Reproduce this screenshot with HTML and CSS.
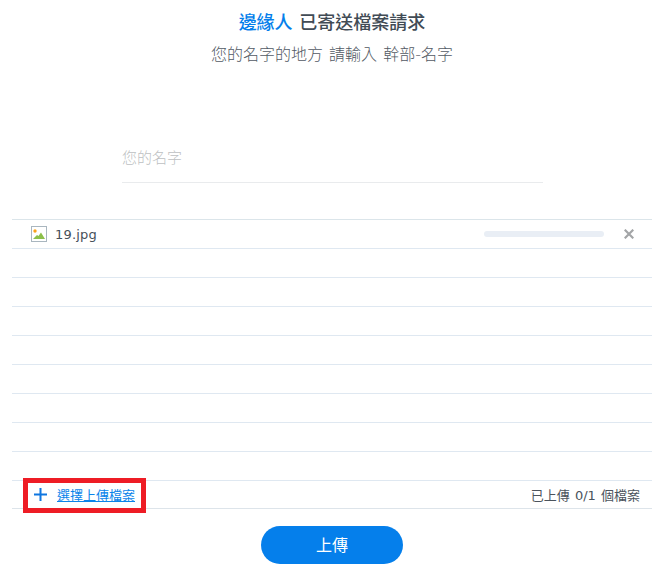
FILE: index.html
```html
<!DOCTYPE html>
<html lang="zh-Hant">
<head>
<meta charset="utf-8">
<title>上傳</title>
<link rel="stylesheet" href="styles.css">
</head>
<body>
<main class="page">
  <h1 class="title"><span class="accent">邊緣人</span> 已寄送檔案請求</h1>
  <p class="subtitle">您的名字的地方 請輸入 幹部-名字</p>
  <div class="name-field"><span class="placeholder">您的名字</span></div>
  <section class="list">
    <div class="row file-row">
      <svg class="file-icon" width="17" height="17" viewBox="0 0 17 17" aria-hidden="true">
        <rect x="0.5" y="0.5" width="15" height="15" fill="#fff" stroke="#a9b6bf"/>
        <circle cx="4" cy="5" r="1.7" fill="#f9a11b"/>
        <path d="M2 13 L6 9 L7.5 10 L10 6.5 L14 13 Z" fill="#8cbf4a"/>
      </svg>
      <span class="file-name">19.jpg</span>
      <span class="progress"></span>
      <svg class="close" width="10" height="10" viewBox="0 0 10 10" aria-hidden="true">
        <path d="M0.7 0.7 L9.3 9.3 M9.3 0.7 L0.7 9.3" stroke="#a3a5a7" stroke-width="2.2" fill="none"/>
      </svg>
    </div>
    <div class="row"></div>
    <div class="row"></div>
    <div class="row"></div>
    <div class="row"></div>
    <div class="row"></div>
    <div class="row"></div>
    <div class="row"></div>
    <div class="row"></div>
    <div class="row footer-row">
      <a class="add" href="#">
        <svg width="13" height="13" viewBox="0 0 13 13" aria-hidden="true">
          <path d="M6.5 0 V13 M0 6.5 H13" stroke="#0f76e0" stroke-width="2" fill="none"/>
        </svg>
        <span class="add-label">選擇上傳檔案</span>
      </a>
      <span class="count">已上傳 0/1 個檔案</span>
      <span class="highlight"></span>
    </div>
  </section>
  <div class="actions"><button class="upload" type="button">上傳</button></div>
</main>
</body>
</html>
```

FILE: styles.css
```css
* { box-sizing: border-box; }
html, body { margin: 0; height: 100%; background: #fff; }
body {
  font-family: "DejaVu Sans", "Noto Sans CJK TC", sans-serif;
  color: #525a64;
  overflow: hidden;
}
.page { width: 668px; height: 573px; padding: 0 16px 0 12px; }
.title {
  margin: 0;
  padding-top: 10px;
  height: 45px;
  font-size: 18px;
  line-height: 26px;
  font-weight: 500;
  word-spacing: 1px;
  text-align: center;
  font-family: "DejaVu Sans", "Noto Sans CJK TC", sans-serif;
  color: #414b55;
}
.accent { color: #057feb; }
.subtitle {
  margin: 0;
  font-size: 16px;
  line-height: 20px;
  text-align: center;
  font-family: "DejaVu Sans", "Noto Sans CJK TC", sans-serif;
  font-weight: 300;
  height: 19px;
  word-spacing: 1px;
}
.name-field {
  margin: 74px 0 0 110px;
  width: 421px;
  height: 45px;
  padding-top: 9px;
  border-bottom: 1px solid #e9ebed;
}
.placeholder {
  font-family: "Noto Sans CJK TC", sans-serif;
  font-weight: 300;
  font-size: 15px;
  line-height: 20px;
  color: #bdbfc2;
  display: block;
}
.list {
  margin-top: 36px;
  border-top: 1px solid #dbe5ea;
}
.row {
  height: 29px;
  border-bottom: 1px solid #dfe8f1;
  display: flex;
  align-items: center;
  position: relative;
}
.file-row { padding: 0 18px 0 19px; }
.file-icon { flex: none; }
.file-name { margin-left: 7px; font-size: 13px; letter-spacing: 0.2px; font-family: "DejaVu Sans", sans-serif; color: #46505a; flex: 1; }
.progress { width: 120px; height: 6px; border-radius: 3px; background: #e9eef5; margin-right: 20px; }
.close { flex: none; }
.footer-row {
  height: 28px;
  justify-content: space-between;
  padding: 0 12px 0 22px;
  border-bottom-color: #dde4ea;
}
.add { display: flex; align-items: center; gap: 10px; color: #0a84ea; text-decoration: underline; font-size: 13px; font-family: "Noto Sans CJK TC", sans-serif; }
.count { font-size: 13px; word-spacing: 1px; font-family: "DejaVu Sans", "Noto Sans CJK TC", sans-serif; color: #4b535c; }
.highlight {
  position: absolute;
  left: 11px;
  top: -3px;
  width: 123px;
  height: 35px;
  border: 5px solid #ee1c25;
  pointer-events: none;
}
.actions { display: flex; justify-content: center; margin-top: 17px; }
.upload {
  width: 142px;
  height: 38px;
  border: 0;
  border-radius: 19px;
  background: #057feb;
  color: #fff;
  font-size: 16px;
  font-family: "Noto Sans CJK TC", sans-serif;
  font-weight: 400;
  padding: 0 0 2px;
}
```
